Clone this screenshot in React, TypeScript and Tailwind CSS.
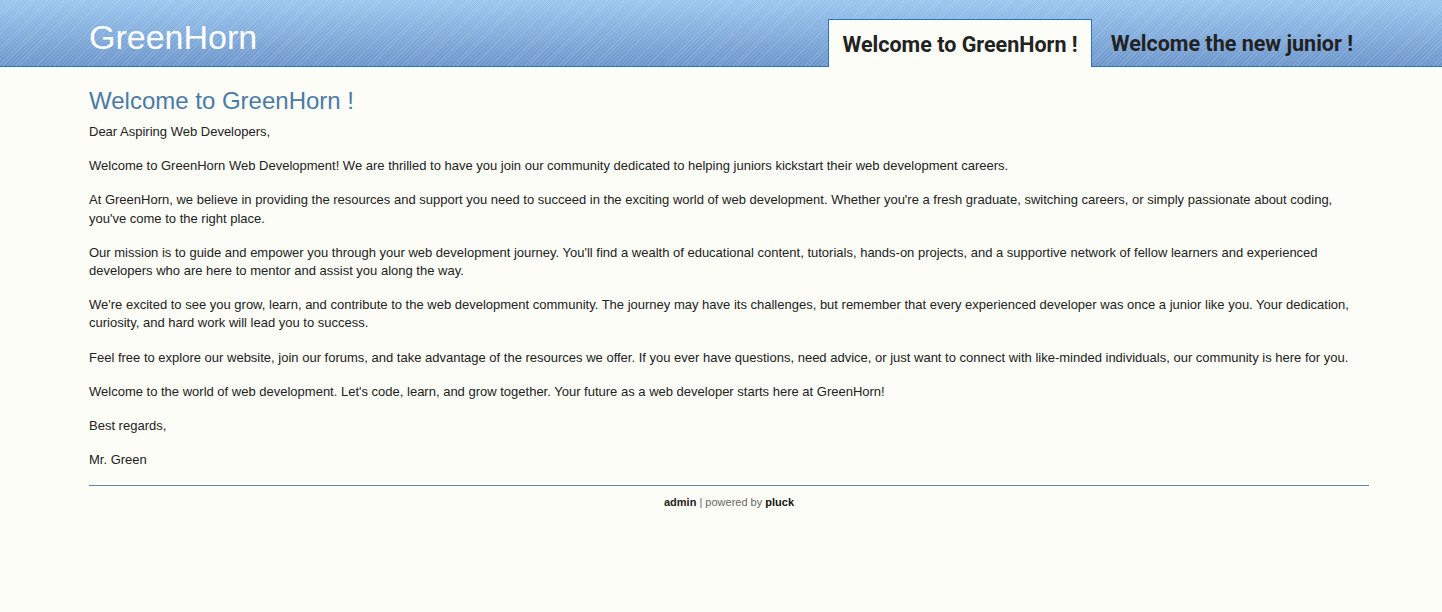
const paragraphs = [
  "Dear Aspiring Web Developers,",
  "Welcome to GreenHorn Web Development! We are thrilled to have you join our community dedicated to helping juniors kickstart their web development careers.",
  "At GreenHorn, we believe in providing the resources and support you need to succeed in the exciting world of web development. Whether you're a fresh graduate, switching careers, or simply passionate about coding, you've come to the right place.",
  "Our mission is to guide and empower you through your web development journey. You'll find a wealth of educational content, tutorials, hands-on projects, and a supportive network of fellow learners and experienced developers who are here to mentor and assist you along the way.",
  "We're excited to see you grow, learn, and contribute to the web development community. The journey may have its challenges, but remember that every experienced developer was once a junior like you. Your dedication, curiosity, and hard work will lead you to success.",
  "Feel free to explore our website, join our forums, and take advantage of the resources we offer. If you ever have questions, need advice, or just want to connect with like-minded individuals, our community is here for you.",
  "Welcome to the world of web development. Let's code, learn, and grow together. Your future as a web developer starts here at GreenHorn!",
  "Best regards,",
  "Mr. Green",
];

export default function App() {
  return (
    <div className="min-h-[612px] bg-[#fcfdf6] font-['Liberation_Sans',Arial,sans-serif] text-[#222]">
      <header className="h-[67px] border-b border-[#2a75bb] bg-[image:repeating-linear-gradient(135deg,rgba(255,255,255,0.14)_0px,rgba(255,255,255,0.14)_1px,transparent_1px,transparent_3px),linear-gradient(to_bottom,#9bc7ef,#6d96cb)]">
        <div className="mx-[89px] flex h-full items-end justify-between">
          <div className="self-start pt-[17px] text-[34px] leading-[40px] text-white">GreenHorn</div>
          <nav className="flex items-end">
            <a className="-mb-px flex h-[48px] items-center border border-b-0 border-[#2a75bb] bg-[#fcfdf6] pl-[13px] pr-[13px] pt-[4px] font-['Roboto',sans-serif] text-[21.5px] font-bold text-[#222]">
              Welcome to GreenHorn !
            </a>
            <a className="flex h-[47px] items-center pl-[19px] pt-[4px] font-['Roboto',sans-serif] text-[21.5px] font-bold text-[#222]">
              Welcome the new junior !
            </a>
          </nav>
        </div>
      </header>
      <main className="mx-[89px] w-[1280px] pt-[19px]">
        <h1 className="mb-[7px] text-[24px] leading-[30px] text-[#4a7ba6]">Welcome to GreenHorn !</h1>
        {paragraphs.map((p, i) => (
          <p key={i} className="mb-[16px] text-[13px] leading-[1.4]">
            {p}
          </p>
        ))}
        <div className="mt-[16px] border-t border-[#5f86aa] pt-[9px] text-center text-[11px] leading-[14px] text-[#666]">
          <b className="text-[#222]">admin</b> | powered by <b className="text-[#111]">pluck</b>
        </div>
      </main>
    </div>
  );
}
